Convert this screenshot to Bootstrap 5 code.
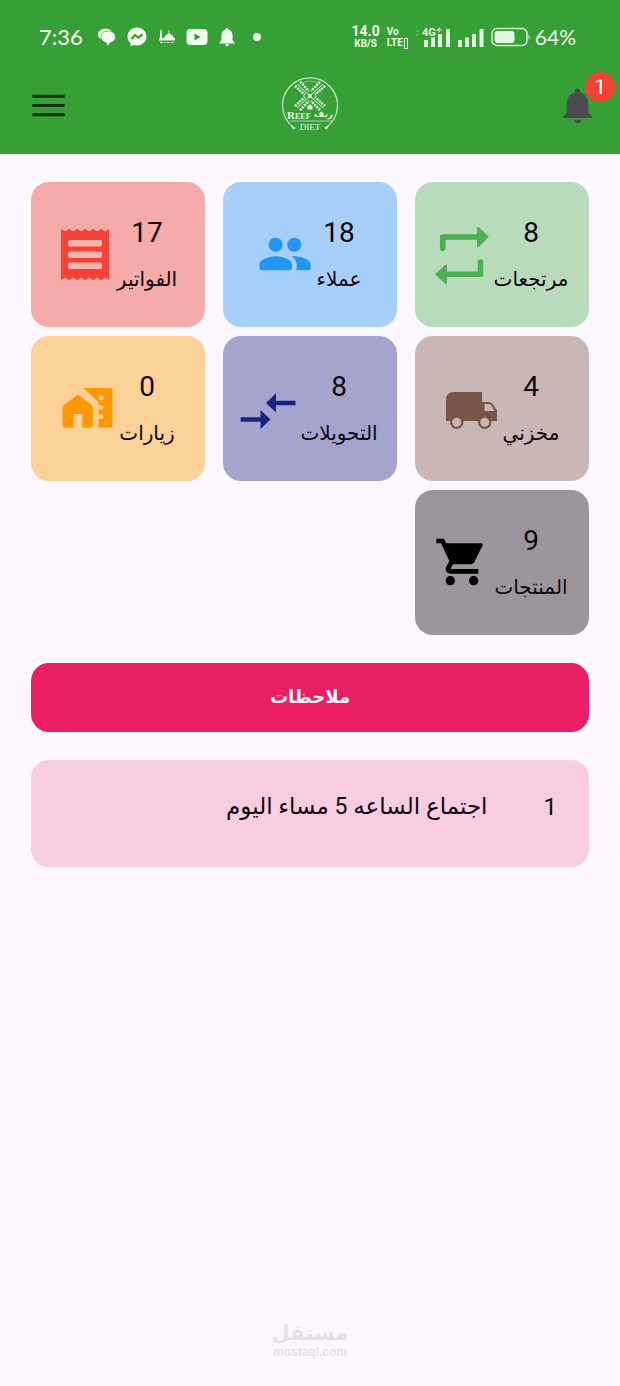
<!DOCTYPE html>
<html lang="ar" dir="rtl">
<head>
<meta charset="utf-8">
<meta name="viewport" content="width=device-width, initial-scale=1">
<title>Reef Diet</title>
<link href="https://cdn.jsdelivr.net/npm/bootstrap@5.3.0/dist/css/bootstrap.min.css" rel="stylesheet">
<style>
  body { background: #fdf7ff; color: #0d060f; font-family: Roboto, "DejaVu Sans", sans-serif; }
  .app-header { background: #369f36; color: #f1fbee; }
  .status-bar { height: 74px; padding: 0 44px 0 39px; }
  .clock { font: 500 22px/24px Lato, sans-serif; margin-right: 13px; }
  .status-icons { gap: 8px; }
  .status-icons svg { width: 22px; height: 22px; }
  .stack { font: 700 12px/11px Roboto, sans-serif; text-align: center; }
  .stack-big { font-size: 14px; line-height: 13px; }
  .stack-small { font-size: 10px; line-height: 11px; }
  .lte-mark { border: 1px solid; padding: 0 1px; margin-left: 1px; font-size: 8px; line-height: 7px; }
  .battery-text { font: 400 21px/24px Lato, sans-serif; }
  .signals { gap: 7px; }
  .toolbar { display: grid; grid-template-columns: 1fr auto 1fr; height: 80px; padding-bottom: 18px; }
  .toolbar-start { padding-left: 27px; }
  .toolbar-end { padding-right: 21px; }
  .icon-btn { border: 0; background: none; padding: 0; width: 43px; height: 43px; position: relative; }
  .icon-btn svg { display: block; width: 43px; height: 43px; }
  .count-badge { position: absolute; right: -16px; top: -12px; width: 30px; height: 30px; border-radius: 50%; background: #f44336; color: #fff; font-size: 20px; line-height: 30px; }
  .logo-art { width: 60px; height: 60px; display: block; }
  .page-main { padding: 28px 31px; }
  .tiles { display: grid; grid-template-columns: repeat(3, 1fr); gap: 9px 18px; }
  .tile { height: 145px; border-radius: 18px; gap: 4px; padding: 0 2px 2px 0; color: #0d060f; text-decoration: none; }
  .tile svg { width: 56px; height: 56px; overflow: visible; flex: none; }
  .tile-count { font-size: 28px; line-height: 32px; }
  .tile-label { font-size: 20px; line-height: 24px; margin-top: 18px; white-space: nowrap; }
  .t-green { background: #b8dbbb; }
  .t-blue { background: #a6d0fa; }
  .t-red { background: #f4abaa; }
  .t-brown { background: #c9b7b6; }
  .t-indigo { background: #a5a4ce; }
  .t-orange { background: #fcd299; }
  .t-grey { background: #9b969b; }
  .notes-btn { background: #e91e63; color: #fff; border: 0; border-radius: 18px; height: 69px; margin-top: 28px; padding-bottom: 4px; font-size: 18px; font-weight: 700; }
  .note { background: #f9cde0; border-radius: 18px; min-height: 107px; margin-top: 28px; padding: 31px 32px; font-size: 24px; line-height: 32px; gap: 56px; }
  .note-text { font-size: 23px; }
  .watermark { color: #e6dfe8; padding-bottom: 27px; }
  .wm-name { font: 700 21px/24px "DejaVu Sans", sans-serif; }
  .wm-site { font: 700 12px/14px "Liberation Sans", sans-serif; }
</style>
</head>
<body class="d-flex flex-column min-vh-100">
<header class="app-header" dir="ltr">
  <div class="status-bar d-flex align-items-center justify-content-between">
    <div class="d-flex align-items-center">
      <span class="clock">7:36</span>
      <div class="status-icons d-flex align-items-center">
        <svg viewBox="0 0 22 22" fill="#f1fbee"><ellipse cx="9.500" cy="8.500" rx="7.500" ry="6"/><path d="M12 5c4.500 0 7.500 2.500 7.500 6 0 3-2.200 5.200-5.500 5.900L11.500 20.500 10.300 16.800C7 16 5 14 5 11c0-3.500 3-6 7-6z" stroke="#369f36" stroke-width=".7"/></svg>
        <svg viewBox="0 0 22 22"><path d="M11 1.500c-5.400 0-9.500 3.900-9.500 9 0 2.800 1.100 5 3 6.700v3.300l3.200-1.600c1 .3 2.100.5 3.300.5 5.400 0 9.500-3.800 9.500-8.900s-4.100-9-9.500-9z" fill="#f1fbee"/><path d="M5.500 13l3.600-4 3 2.700L16.500 8.500" fill="none" stroke="#369f36" stroke-width="2.200"/></svg>
        <svg viewBox="0 0 22 22" fill="#f1fbee"><path d="M4 5l1-2 1 2v9H4zM8 14c0-4 2-5 5-7 3 2 5 3 5 7zM3 12h16v2.500H3zM12.600 4h.8v4h-.8z"/><path d="M4 16.500h3M8 16.500h2M11 16.500h3M15 16.500h3" stroke="#f1fbee" stroke-width="1.200" opacity=".8"/></svg>
        <svg viewBox="0 0 22 22"><rect x=".5" y="3" width="21" height="16" rx="4" fill="#f1fbee"/><path d="M8.500 7.500l6 3.500-6 3.500z" fill="#369f36"/></svg>
        <svg viewBox="0 0 22 22" fill="#f1fbee"><path d="M11 2c.9 0 1.500.6 1.500 1.500C15.200 4.200 16.500 6.500 16.500 9v5l2 2.500v.9h-15v-.9l2-2.500V9c0-2.500 1.300-4.800 4-5.500C9.500 2.600 10.100 2 11 2zM9 18.300h4c0 1-.9 1.800-2 1.800s-2-.8-2-1.800z"/></svg>
        <svg viewBox="0 0 22 22"><circle cx="11" cy="11" r="4" fill="#f1fbee"/></svg>
      </div>
    </div>
    <div class="signals d-flex align-items-center">
      <div class="stack"><div class="stack-big">14.0</div><div class="stack-small">KB/S</div></div>
      <div class="stack stack-small text-start"><div>Vo</div><div>LTE<span class="lte-mark" aria-hidden="true"></span></div></div>
      <svg width="36" height="22" viewBox="0 0 36 22" fill="#e4f7df"><path d="M9 14h4v7H9zM16 11.500h4V21h-4zM23 8h4v13h-4zM31 3h4v18h-4z"/><text x="7" y="10" font-family="Roboto" font-size="11" font-weight="700">4G</text><path d="M24 1.500v5M21.500 4h5" stroke="#e4f7df"/><path d="M0 6l2-3 2 3zM0 8l2 3 2-3z" opacity=".25"/></svg>
      <svg width="26" height="22" viewBox="0 0 26 22" fill="#e4f7df"><path d="M0 14h4v7H0zM7 11.500h4V21H7zM14 8h4v13h-4zM21.500 3h4v18h-4z"/></svg>
      <div class="d-flex align-items-center gap-1">
        <svg width="40" height="20" viewBox="0 0 40 20"><rect x="1" y="1.500" width="35" height="17" rx="5" fill="none" stroke="#d5f0d0" stroke-width="1.500"/><rect x="3.500" y="4" width="20" height="12" rx="3" fill="#e4f5df"/><path d="M37.500 7.500c1.600.5 1.600 4.500 0 5z" fill="#d5f0d0"/></svg>
        <span class="battery-text">64%</span>
      </div>
    </div>
  </div>
  <nav class="toolbar align-items-center" aria-label="Main">
    <div class="toolbar-start d-flex"><button class="icon-btn" type="button" aria-label="القائمة"><svg viewBox="0 0 24 24" fill="#14300f"><path d="M3 18h18v-1.700H3zM3 12.900h18v-1.800H3zM3 6v1.700h18V6z"/></svg></button></div>
    <a href="#" aria-label="Reef Diet">
      <svg class="logo-art" viewBox="0 0 60 60" fill="#e6f8e2">
        <path d="M13 52a27.500 27.500 0 1 1 34 0" fill="none" stroke="#c9ecc4" stroke-width="1.200"/>
        <path d="M11 50l5 3-3 1.500zM49 50l-5 3 3 1.500z"/>
        <path d="M22 8q8-4 16 0" fill="none" stroke="#8fd089" stroke-width=".8"/>
        <g fill="none" stroke="#e0f5dc">
          <path d="M17 9L43 33M43 9L17 33" stroke-width="1"/>
          <path d="M15 11l10 9M20 7l9 9M45 11l-10 9M40 7l-9 9M15 31l10-9M20 35l9-9M45 31l-10-9M40 35l-9-9" stroke-width="2.600" stroke-dasharray="2 1"/>
        </g>
        <circle cx="30" cy="21" r="2"/><path d="M27.500 31.500l2.500-2.500 2.500 2.500v3h-5z"/>
        <text x="7" y="44" font-family="Liberation Serif" font-weight="700" font-size="11">R<tspan font-size="8">EEF</tspan></text>
        <text x="53" y="42" direction="rtl" font-family="DejaVu Sans" font-weight="700" font-size="9">ريف</text>
        <path d="M10 46h43" stroke="#c9ecc4" stroke-width=".7"/>
        <text x="30" y="55" text-anchor="middle" font-family="Liberation Serif" font-size="9">DIET</text>
      </svg>
    </a>
    <div class="toolbar-end d-flex justify-content-end"><button class="icon-btn" type="button" aria-label="الإشعارات"><svg viewBox="0 0 24 24" fill="#4c4a50"><path d="M12 22c1.100 0 2-.9 2-2h-4c0 1.100.890 2 2 2zm6-6v-5c0-3.070-1.640-5.640-4.500-6.320V4c0-.830-.670-1.500-1.500-1.500s-1.500.670-1.500 1.500v.680C7.630 5.360 6 7.920 6 11v5l-2 2v1h16v-1l-2-2z"/></svg><span class="count-badge">1</span></button></div>
  </nav>
</header>

<main class="page-main">
  <div class="tiles">
    <a href="#" class="tile t-green d-flex align-items-center justify-content-center">
      <div class="text-center"><div class="tile-count">8</div><div class="tile-label">مرتجعات</div></div>
      <svg viewBox="0 0 56 56" fill="#4caf50" stroke="#4caf50" stroke-linejoin="round" stroke-linecap="round"><path d="M8.700 22.500V11H44M46.500 36v12.300H11" fill="none" stroke-width="5.500"/><path d="M44 2l9.500 8.800L44 20zM12 39.500L2.500 48.300 12 57z" stroke-width="2"/></svg>
    </a>
    <a href="#" class="tile t-blue d-flex align-items-center justify-content-center">
      <div class="text-center"><div class="tile-count">18</div><div class="tile-label">عملاء</div></div>
      <svg viewBox="0 0 24 24" fill="#2196f3"><path d="M16 11c1.660 0 2.990-1.340 2.990-3S17.660 5 16 5s-3 1.340-3 3 1.340 3 3 3zm-8 0c1.660 0 2.990-1.340 2.990-3S9.660 5 8 5 5 6.340 5 8s1.340 3 3 3zm0 2c-2.330 0-7 1.170-7 3.500V18c0 .550.450 1 1 1h12c.550 0 1-.450 1-1v-1.500c0-2.330-4.670-3.500-7-3.500zm8 0c-.290 0-.620.020-.970.050C16.190 13.890 17 15.020 17 16.500V18c0 .350-.070.690-.180 1H22c.550 0 1-.450 1-1v-1.500c0-2.330-4.670-3.500-7-3.500z"/></svg>
    </a>
    <a href="#" class="tile t-red d-flex align-items-center justify-content-center">
      <div class="text-center"><div class="tile-count">17</div><div class="tile-label">الفواتير</div></div>
      <svg viewBox="0 0 56 56"><path d="M4 54V3l4 2.500L12 3l4 2.500L20 3l4 2.500L28 3l4 2.500L36 3l4 2.500L44 3l4 2.500L52 3v51l-4-2.500-4 2.500-4-2.500-4 2.500-4-2.500-4 2.500-4-2.500-4 2.500-4-2.500-4 2.500-4-2.500z" fill="#f44336"/><path d="M13 14h30q2 0 2 2v2.500q0 2-2 2H13q-2 0-2-2V16q0-2 2-2zM13 25.500h30q2 0 2 2V30q0 2-2 2H13q-2 0-2-2v-2.500q0-2 2-2zM13 36.500h30q2 0 2 2V41q0 2-2 2H13q-2 0-2-2v-2.500q0-2 2-2z" fill="#f9b3b0"/></svg>
    </a>
    <a href="#" class="tile t-brown d-flex align-items-center justify-content-center">
      <div class="text-center"><div class="tile-count">4</div><div class="tile-label">مخزني</div></div>
      <svg viewBox="0 0 56 56"><path d="M3 20Q3 12 11 12h28v10h7q2.500 0 4 2.500l4 6V41H3z" fill="#795548"/><path d="M41.500 24h4.500q1.500 0 2.500 1.500l3 5.500h-10z" fill="#c9b7b6"/><g fill="#c9b7b6" stroke="#795548" stroke-width="2.200"><circle cx="13.700" cy="42.300" r="5.600"/><circle cx="41.700" cy="42.300" r="5.600"/></g></svg>
    </a>
    <a href="#" class="tile t-indigo d-flex align-items-center justify-content-center">
      <div class="text-center"><div class="tile-count">8</div><div class="tile-label">التحويلات</div></div>
      <svg viewBox="0 0 56 56" fill="#1a237e"><path d="M36 13.300L26 23l10 9.500V25.300h19.500v-4.500H36zM20.500 30v7.200H.7v4.500h19.800V49l10-9.600z"/></svg>
    </a>
    <a href="#" class="tile t-orange d-flex align-items-center justify-content-center">
      <div class="text-center"><div class="tile-count">0</div><div class="tile-label">زيارات</div></div>
      <svg viewBox="0 0 56 56"><path d="M3.500 28q0-2 1.500-3.200L19 14.500l13.500 10.300Q34 26 34 28v17.500q0 2.300-2.300 2.300h-8.400V34h-9v13.800H5.800q-2.300 0-2.300-2.300zM24.300 8H51q2.500 0 2.500 2.500V45q0 2.500-2.500 2.500H39.500V22z" fill="#ff9800"/><g fill="#fcd299"><circle cx="42" cy="18" r="2.400"/><circle cx="42" cy="27.500" r="2.400"/><circle cx="42" cy="36.500" r="2.400"/></g></svg>
    </a>
    <a href="#" class="tile t-grey d-flex align-items-center justify-content-center">
      <div class="text-center"><div class="tile-count">9</div><div class="tile-label">المنتجات</div></div>
      <svg viewBox="0 0 24 24"><path d="M7 18c-1.100 0-1.990.900-1.990 2S5.900 22 7 22s2-.900 2-2-.900-2-2-2zM1 2v2h2l3.600 7.590-1.350 2.450c-.160.280-.250.610-.250.960 0 1.100.900 2 2 2h12v-2H7.420c-.140 0-.250-.110-.250-.250l.030-.120.900-1.630h7.450c.750 0 1.410-.410 1.750-1.030L21 4.500 20.500 4H5.210l-.940-2H1zm16 16c-1.100 0-1.990.900-1.990 2s.890 2 1.990 2 2-.900 2-2-.900-2-2-2z"/></svg>
    </a>
  </div>
  <button type="button" class="notes-btn d-block w-100">ملاحظات</button>
  <div class="note d-flex align-items-start"><span>1</span><span class="note-text">اجتماع الساعه 5 مساء اليوم</span></div>
</main>

<footer class="watermark mt-auto text-center">
  <div class="wm-name">مستقل</div>
  <div class="wm-site" dir="ltr">mostaql.com</div>
</footer>
<script src="https://cdn.jsdelivr.net/npm/bootstrap@5.3.0/dist/js/bootstrap.bundle.min.js"></script>
</body>
</html>
